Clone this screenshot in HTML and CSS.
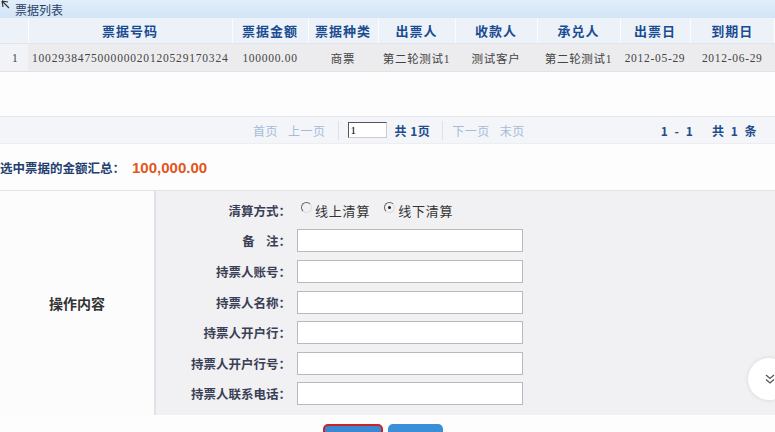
FILE: index.html
```html
<!DOCTYPE html>
<html lang="zh-CN">
<head>
    <meta charset="UTF-8">
    <title>票据列表</title>
    <link rel="stylesheet" href="styles.css">
</head>
<body>
    <div class="panel-title">
        <svg class="cursor" width="9" height="9" viewBox="0 0 9 9"><path d="M1 1 L7 2 M1 1 L2 7 M1 1 L8 8" stroke="#333" stroke-width="1.2" fill="none"/></svg>
        <span>票据列表</span>
    </div>

    <table class="grid">
        <colgroup>
            <col style="width:28px"><col style="width:204px"><col style="width:76px"><col style="width:70px">
            <col style="width:77px"><col style="width:82px"><col style="width:83px"><col style="width:70px"><col>
        </colgroup>
        <thead>
            <tr>
                <th></th><th>票据号码</th><th>票据金额</th><th>票据种类</th><th>出票人</th>
                <th>收款人</th><th>承兑人</th><th>出票日</th><th>到期日</th>
            </tr>
        </thead>
        <tbody>
            <tr>
                <td class="num">1</td>
                <td class="left">100293847500000020120529170324</td>
                <td>100000.00</td>
                <td>商票</td>
                <td>第二轮测试1</td>
                <td>测试客户</td>
                <td>第二轮测试1</td>
                <td>2012-05-29</td>
                <td>2012-06-29</td>
            </tr>
        </tbody>
    </table>
    <div class="grid-empty"></div>

    <div class="pager">
        <div class="pager-nav">
            <span class="link">首页</span>
            <span class="link">上一页</span>
            <span class="sep"></span>
            <input class="page-input" type="text" value="1">
            <span class="total">共 1页</span>
            <span class="sep"></span>
            <span class="link">下一页</span>
            <span class="link">末页</span>
        </div>
        <div class="pager-info">1 - 1 &nbsp; 共 1 条</div>
    </div>

    <div class="summary">
        <span class="summary-label">选中票据的金额汇总：</span>
        <span class="summary-value">100,000.00</span>
    </div>

    <table class="form-box">
        <tr>
            <td class="form-side">操作内容</td>
            <td class="form-main">
                <div class="form-row">
                    <label>清算方式：</label>
                    <span class="radio"><span class="dot"></span>线上清算</span>
                    <span class="radio on"><span class="dot"></span>线下清算</span>
                </div>
                <div class="form-row"><label>备&nbsp;&nbsp;&nbsp;&nbsp;注：</label><input type="text"></div>
                <div class="form-row"><label>持票人账号：</label><input type="text"></div>
                <div class="form-row"><label>持票人名称：</label><input type="text"></div>
                <div class="form-row"><label>持票人开户行：</label><input type="text"></div>
                <div class="form-row"><label>持票人开户行号：</label><input type="text"></div>
                <div class="form-row"><label>持票人联系电话：</label><input type="text"></div>
            </td>
        </tr>
    </table>

    <div class="actions">
        <button class="btn btn-focus"></button>
        <button class="btn"></button>
    </div>

    <div class="scroll-btn">
        <svg width="12" height="12" viewBox="0 0 12 12"><path d="M2 2 L6 5.5 L10 2 M2 6.5 L6 10 L10 6.5" stroke="#555" stroke-width="1.3" fill="none"/></svg>
    </div>
</body>
</html>
```

FILE: styles.css
```css
body {
    margin: 0;
    width: 775px;
    height: 432px;
    overflow: hidden;
    background: #fdfdfe;
    font-family: "Noto Sans CJK SC", "DejaVu Sans", sans-serif;
    font-size: 12px;
    color: #333;
    position: relative;
}
.panel-title {
    height: 18px;
    background: linear-gradient(#e2eefa, #d2e5f7);
    display: flex;
    align-items: center;
    padding-left: 15px;
    font-size: 12px;
    color: #2a3f66;
    position: relative;
}
.panel-title span {
    margin-top: 1px;
}
.cursor {
    position: absolute;
    left: 1px;
    top: 0;
}
.grid {
    width: 775px;
    border-collapse: collapse;
    table-layout: fixed;
}
.grid th {
    height: 25px;
    background: #edf2f9;
    color: #1b4c92;
    font-weight: bold;
    font-size: 13px;
    letter-spacing: 1px;
    border-right: 1px solid #fbfcfe;
    border-bottom: 1px solid #dfe6ef;
    padding: 0;
}
.grid td {
    height: 27px;
    background: #ececee;
    text-align: center;
    font-family: "Liberation Serif", "Noto Sans CJK SC", serif;
    font-size: 11.5px;
    letter-spacing: 0.7px;
    color: #444;
    padding: 0;
    white-space: nowrap;
    overflow: hidden;
    border-bottom: 1px solid #e2e2e4;
}
.grid td.num {
    background: #f2f3f6;
    text-align: left;
    padding-left: 12px;
}
.grid td.left {
    text-align: left;
    padding-left: 4px;
    letter-spacing: 0.8px;
}
.grid-empty {
    height: 44px;
    background: #fdfdfe;
}
.pager {
    height: 26px;
    background: #f3f5f9;
    border-top: 1px solid #e4e8ee;
    border-bottom: 1px solid #eceef2;
    display: flex;
    align-items: center;
    position: relative;
}
.pager-nav {
    display: flex;
    align-items: center;
    margin-left: 253px;
    font-size: 12px;
}
.pager .link {
    color: #a5bcd8;
    margin-right: 10px;
    letter-spacing: 0.5px;
}
.pager .sep {
    width: 1px;
    height: 19px;
    background: #dde2ea;
    margin: 0 9px 0 2px;
}
.page-input {
    width: 35px;
    height: 14px;
    border: 1px solid #555;
    border-right-color: #ccc;
    border-bottom-color: #ccc;
    padding: 0 0 0 2px;
    font-size: 11px;
    font-family: "Liberation Serif", serif;
    margin-right: 8px;
}
.pager .total {
    color: #1e4c8c;
    font-weight: bold;
    margin-right: 10px;
    letter-spacing: 0.5px;
}
.pager-info {
    margin-left: auto;
    margin-right: 18px;
    color: #1e4c8c;
    font-weight: bold;
    font-size: 12px;
    word-spacing: 3px;
    letter-spacing: 0.5px;
}
.summary {
    height: 46px;
    display: flex;
    align-items: center;
    padding-top: 1px;
    box-sizing: border-box;
}
.summary-label {
    color: #23406e;
    font-weight: bold;
    font-size: 12.5px;
}
.summary-value {
    color: #e0561c;
    font-weight: bold;
    font-size: 15px;
    font-family: "Liberation Sans", sans-serif;
    margin-left: 7px;
}
.form-box {
    width: 775px;
    border-collapse: collapse;
    border-top: 1px solid #e4e4e8;
}
.form-side {
    width: 154px;
    background: #fcfcfd;
    border-right: 2px solid #e2e2e6;
    text-align: center;
    font-weight: bold;
    font-size: 14px;
    color: #333;
    padding: 0;
}
.form-main {
    background: #f1f1f3;
    padding: 4px 0 6px 0;
}
.form-row {
    height: 30.6px;
    display: flex;
    align-items: center;
}
.form-row label {
    width: 135px;
    text-align: right;
    font-weight: bold;
    color: #3a3f55;
    font-size: 12.5px;
    margin-right: 6px;
    white-space: nowrap;
}
.form-row input {
    width: 224px;
    height: 21px;
    border: 1px solid #b9b9bd;
    background: #fff;
    padding: 0;
}
.radio {
    display: flex;
    align-items: center;
    font-size: 13px;
    letter-spacing: 0.8px;
    color: #333;
    margin-right: 10px;
}
.radio .dot {
    width: 9px;
    height: 9px;
    border-radius: 50%;
    border: 1px solid #666;
    border-right-color: #ddd;
    border-bottom-color: #ddd;
    margin: -6px 3px 0 4px;
    position: relative;
}
.radio.on .dot::after {
    content: "";
    position: absolute;
    left: 3px;
    top: 3px;
    width: 3px;
    height: 3px;
    border-radius: 50%;
    background: #222;
}
.actions {
    display: flex;
    gap: 5px;
    padding-left: 323px;
    padding-top: 9px;
}
.btn {
    width: 55px;
    height: 26px;
    border: none;
    border-radius: 5px;
    background: #3b8ed8;
}
.btn-focus {
    width: 60px;
    border: 2px solid #c8242a;
    background: #3a87d2;
}
.scroll-btn {
    position: absolute;
    left: 748px;
    top: 358px;
    width: 42px;
    height: 42px;
    border-radius: 50%;
    background: #fff;
    box-shadow: 0 0 4px rgba(0, 0, 0, 0.12);
    display: flex;
    align-items: center;
    padding-left: 16px;
    box-sizing: border-box;
}
```
